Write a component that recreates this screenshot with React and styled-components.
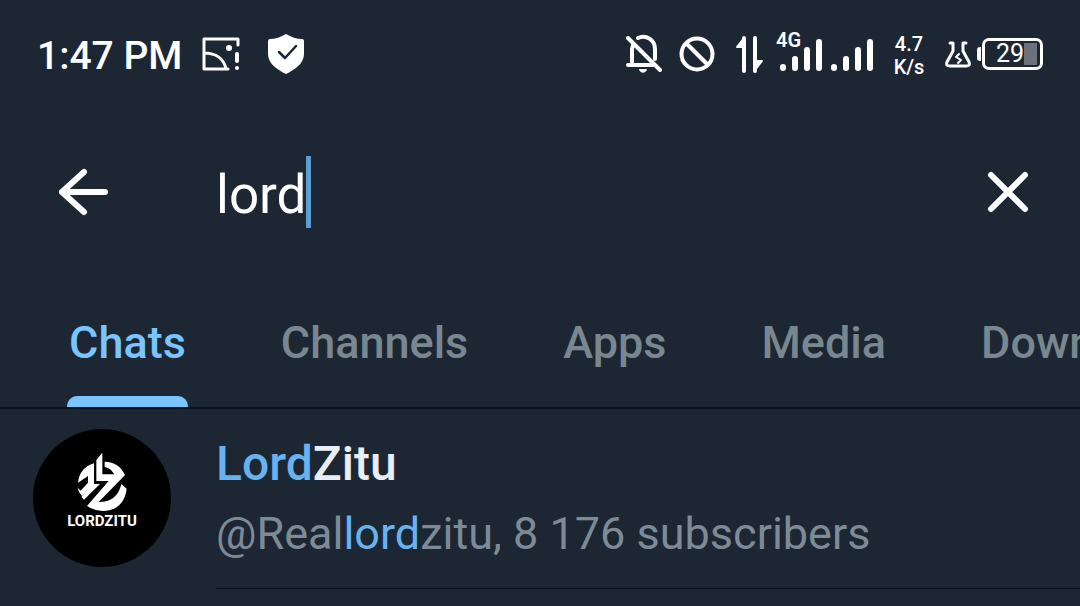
import React, { useState } from "react";
import styled, { createGlobalStyle } from "styled-components";

const GlobalStyle = createGlobalStyle`
  * { box-sizing: border-box; }
  body {
    margin: 0;
    background: #1d2733;
    color: #ffffff;
    font-family: Roboto, "Liberation Sans", sans-serif;
    overflow-x: hidden;
  }
  button { font: inherit; border: 0; padding: 0; background: none; color: inherit; cursor: pointer; }
`;

const Screen = styled.main`
  display: flex;
  flex-direction: column;
`;

const StatusBar = styled.header`
  display: flex;
  align-items: center;
  justify-content: space-between;
  height: 108px;
  padding: 0 37px;
`;

const StatusGroup = styled.div`
  display: flex;
  align-items: center;
  gap: ${(p) => p.$gap}px;
`;

const Clock = styled.time`
  padding-top: 4px;
  font-size: 39px;
  line-height: 48px;
  font-weight: 500;
  white-space: nowrap;
`;

const Icon = styled.svg`
  display: block;
  flex: none;
  fill: none;
  stroke: #ffffff;
  stroke-width: ${(p) => p.$weight || 3};
  stroke-linecap: round;
  stroke-linejoin: round;
`;

const Signal = styled.div`
  position: relative;
  display: flex;
`;

const NetworkLabel = styled.span`
  position: absolute;
  left: -4px;
  top: -6px;
  font-size: 20px;
  line-height: 20px;
  font-weight: 600;
`;

const Speed = styled.div`
  width: 34px;
  padding-top: 3px;
  font-size: 20px;
  line-height: 23px;
  font-weight: 500;
  text-align: center;
  white-space: nowrap;
`;

const BatteryGroup = styled.div`
  display: flex;
  align-items: center;
  gap: 6px;
`;

const Battery = styled.div`
  display: flex;
  align-items: center;
  gap: 1px;
  &::before {
    content: "";
    width: 4px;
    height: 14px;
    border-radius: 3px 0 0 3px;
    background: #ffffff;
  }
`;

const BatteryBody = styled.div`
  display: flex;
  align-items: center;
  justify-content: flex-end;
  width: 61px;
  height: 32px;
  padding-right: 3px;
  border: 3px solid #ffffff;
  border-radius: 7px;
  font-size: 25px;
  line-height: 26px;
  &::after {
    content: "";
    width: 13px;
    height: 22px;
    background: #6b717d;
  }
`;

const SearchBar = styled.form`
  display: flex;
  align-items: center;
  height: 168px;
  padding: 0 50px 0 57px;
`;

const IconButton = styled.button`
  display: flex;
  flex: none;
`;

const Field = styled.label`
  display: flex;
  align-items: center;
  flex: 1;
  min-width: 0;
  margin-left: 106px;
`;

const SearchInput = styled.input`
  field-sizing: content;
  min-width: 0;
  max-width: 100%;
  height: 72px;
  padding: 5px 0 0;
  border: 0;
  outline: 0;
  background: none;
  color: #ffffff;
  caret-color: transparent;
  font: 400 53px/67px Roboto, "Liberation Sans", sans-serif;
`;

const Caret = styled.span`
  width: 5px;
  height: 72px;
  background: #5c9ed4;
`;

const Tabs = styled.nav`
  display: flex;
  gap: 91px;
  height: 133px;
  padding: 0 67px;
  overflow: hidden;
  border-bottom: 2px solid #0b1018;
`;

const Tab = styled.button`
  display: flex;
  flex: none;
  flex-direction: column;
  justify-content: space-between;
  padding: 41px 2px 0;
  font-size: 45px;
  line-height: 52px;
  font-weight: 500;
  color: ${(p) => (p.$active ? "#7ac4ff" : "#798791")};
  &::after {
    content: "";
    align-self: stretch;
    height: 11px;
    margin: 0 -2px;
    border-radius: 10px 10px 0 0;
    background: ${(p) => (p.$active ? "#7ac4ff" : "transparent")};
  }
`;

const Result = styled.a`
  display: flex;
  gap: 45px;
  padding-left: 33px;
  color: inherit;
  text-decoration: none;
`;

const Avatar = styled.span`
  display: flex;
  flex: none;
  flex-direction: column;
  align-items: center;
  width: 138px;
  height: 138px;
  margin-top: 20px;
  padding-top: 22px;
  border-radius: 50%;
  background: #000000;
`;

const AvatarName = styled.span`
  font-size: 15px;
  line-height: 16px;
  font-weight: 700;
`;

const ResultText = styled.span`
  display: flex;
  flex: 1;
  flex-direction: column;
  gap: 14px;
  min-width: 0;
  height: 180px;
  padding-top: 27px;
  border-bottom: 1px solid #0b1018;
  white-space: nowrap;
`;

const Title = styled.span`
  font-size: 48px;
  line-height: 56px;
  font-weight: 500;
  color: #e9eef6;
`;

const Subtitle = styled.span`
  font-size: 45px;
  line-height: 56px;
  color: #7d8b97;
`;

const Match = styled.span`
  color: #67b2ef;
`;

const TABS = ["Chats", "Channels", "Apps", "Media", "Downloads"];

function SignalBars() {
  return (
    <Icon width="42" height="36" viewBox="0 0 42 36" $weight={6} aria-hidden="true">
      <path d="M3 31v1M15 23v9M27 14v18M39 6v26" />
    </Icon>
  );
}

export default function App() {
  const [query, setQuery] = useState("lord");
  const [active, setActive] = useState("Chats");

  return (
    <>
      <GlobalStyle />
      <Screen>
        <StatusBar>
          <StatusGroup $gap={20}>
            <Clock>1:47 PM</Clock>
            <StatusGroup $gap={28}>
              <Icon width="38" height="34" viewBox="0 0 38 34" aria-hidden="true">
                <path d="M36 8V2H2v30h24M2 16c12 0 20 6 22 16" />
                <path d="M35 17v7" strokeWidth="4" />
                <circle cx="27" cy="11" r="3" fill="#fff" stroke="none" />
                <circle cx="35" cy="31" r="2" fill="#fff" stroke="none" />
              </Icon>
              <Icon width="36" height="40" viewBox="0 0 36 40" aria-hidden="true">
                <path d="M18 0c5 3 11 5 16 5q2 0 2 2v13c0 10-10 16-18 20C10 36 0 30 0 20V7q0-2 2-2C7 5 13 3 18 0Z" fill="#fff" stroke="none" />
                <path d="m11 18 6 6 11-12" stroke="#1d2733" strokeWidth="2.500" />
              </Icon>
            </StatusGroup>
          </StatusGroup>

          <StatusGroup $gap={19}>
            <StatusGroup $gap={17}>
              <StatusGroup $gap={16}>
                <Icon width="38" height="40" viewBox="0 0 38 40" $weight={4} aria-hidden="true">
                  <path d="M3 4l32 32M3 31h25M7 30V15l1-4M13 4c8-4 17 2 17 11v10" />
                  <path d="M14 35h8c-1 5-7 5-8 0Z" fill="#fff" stroke="none" />
                </Icon>
                <StatusGroup $gap={20}>
                  <Icon width="36" height="36" viewBox="0 0 36 36" $weight={4} aria-hidden="true">
                    <circle cx="18" cy="18" r="15.500" />
                    <path d="m8 8 20 20" />
                  </Icon>
                  <Icon width="28" height="38" viewBox="0 0 28 38" $weight={4} aria-hidden="true">
                    <path d="M9 3v33M20 3v33" />
                    <path d="M9 3v9H2ZM20 35v-9h7Z" fill="#fff" strokeWidth="2" />
                  </Icon>
                </StatusGroup>
              </StatusGroup>
              <Signal>
                <StatusGroup $gap={9}>
                  <NetworkLabel>4G</NetworkLabel>
                  <SignalBars />
                  <SignalBars />
                </StatusGroup>
              </Signal>
            </StatusGroup>
            <Speed>
              4.7
              <br />
              K/s
            </Speed>
            <BatteryGroup>
              <Icon width="26" height="28" viewBox="0 0 26 28" $weight={3} aria-hidden="true">
                <path d="M5 3h3v8L2 22c-1 3 0 4 3 4h16c3 0 4-1 3-4l-6-11V3h3" />
                <path d="m14 14-3 3 5 3-3 3" strokeWidth="2" />
              </Icon>
              <Battery>
                <BatteryBody>29</BatteryBody>
              </Battery>
            </BatteryGroup>
          </StatusGroup>
        </StatusBar>

        <SearchBar role="search" onSubmit={(e) => e.preventDefault()}>
          <IconButton type="button" aria-label="Back">
            <Icon width="53" height="48" viewBox="0 0 53 48" $weight={6} aria-hidden="true">
              <path d="M48 24H5M27 4 5 24l22 20" />
            </Icon>
          </IconButton>
          <Field>
            <SearchInput
              type="text"
              aria-label="Search"
              value={query}
              onChange={(e) => setQuery(e.target.value)}
            />
            <Caret />
          </Field>
          <IconButton type="button" aria-label="Clear search" onClick={() => setQuery("")}>
            <Icon width="44" height="44" viewBox="0 0 44 44" $weight={6} aria-hidden="true">
              <path d="m5 5 34 34M39 5 5 39" />
            </Icon>
          </IconButton>
        </SearchBar>

        <Tabs aria-label="Search categories">
          {TABS.map((name) => (
            <Tab key={name} type="button" $active={name === active} onClick={() => setActive(name)}>
              {name}
            </Tab>
          ))}
        </Tabs>

        <Result href="#lordzitu">
          <Avatar>
            <svg width="54" height="62" viewBox="165 93 162 186" fill="#fff" aria-hidden="true">
              <path d="M229 120 247 98V163H283Q272 144 254 141V125Q297 126 315 165L236 246Q292 246 304 192L320 206C316 250 285 274 247 273Q222 272 201 258L266 183H229Z" />
              <path d="M222 130V192H240L192 239 184 231 204 206V168L174 188Q179 143 222 130Z" />
              <path d="M173 203 182 212 206 186V206L186 228Q175 217 173 203Z" />
            </svg>
            <AvatarName>LORDZITU</AvatarName>
          </Avatar>
          <ResultText>
            <Title>
              <Match>Lord</Match>Zitu
            </Title>
            <Subtitle>
              @Real<Match>lord</Match>zitu, 8 176 subscribers
            </Subtitle>
          </ResultText>
        </Result>
      </Screen>
    </>
  );
}
